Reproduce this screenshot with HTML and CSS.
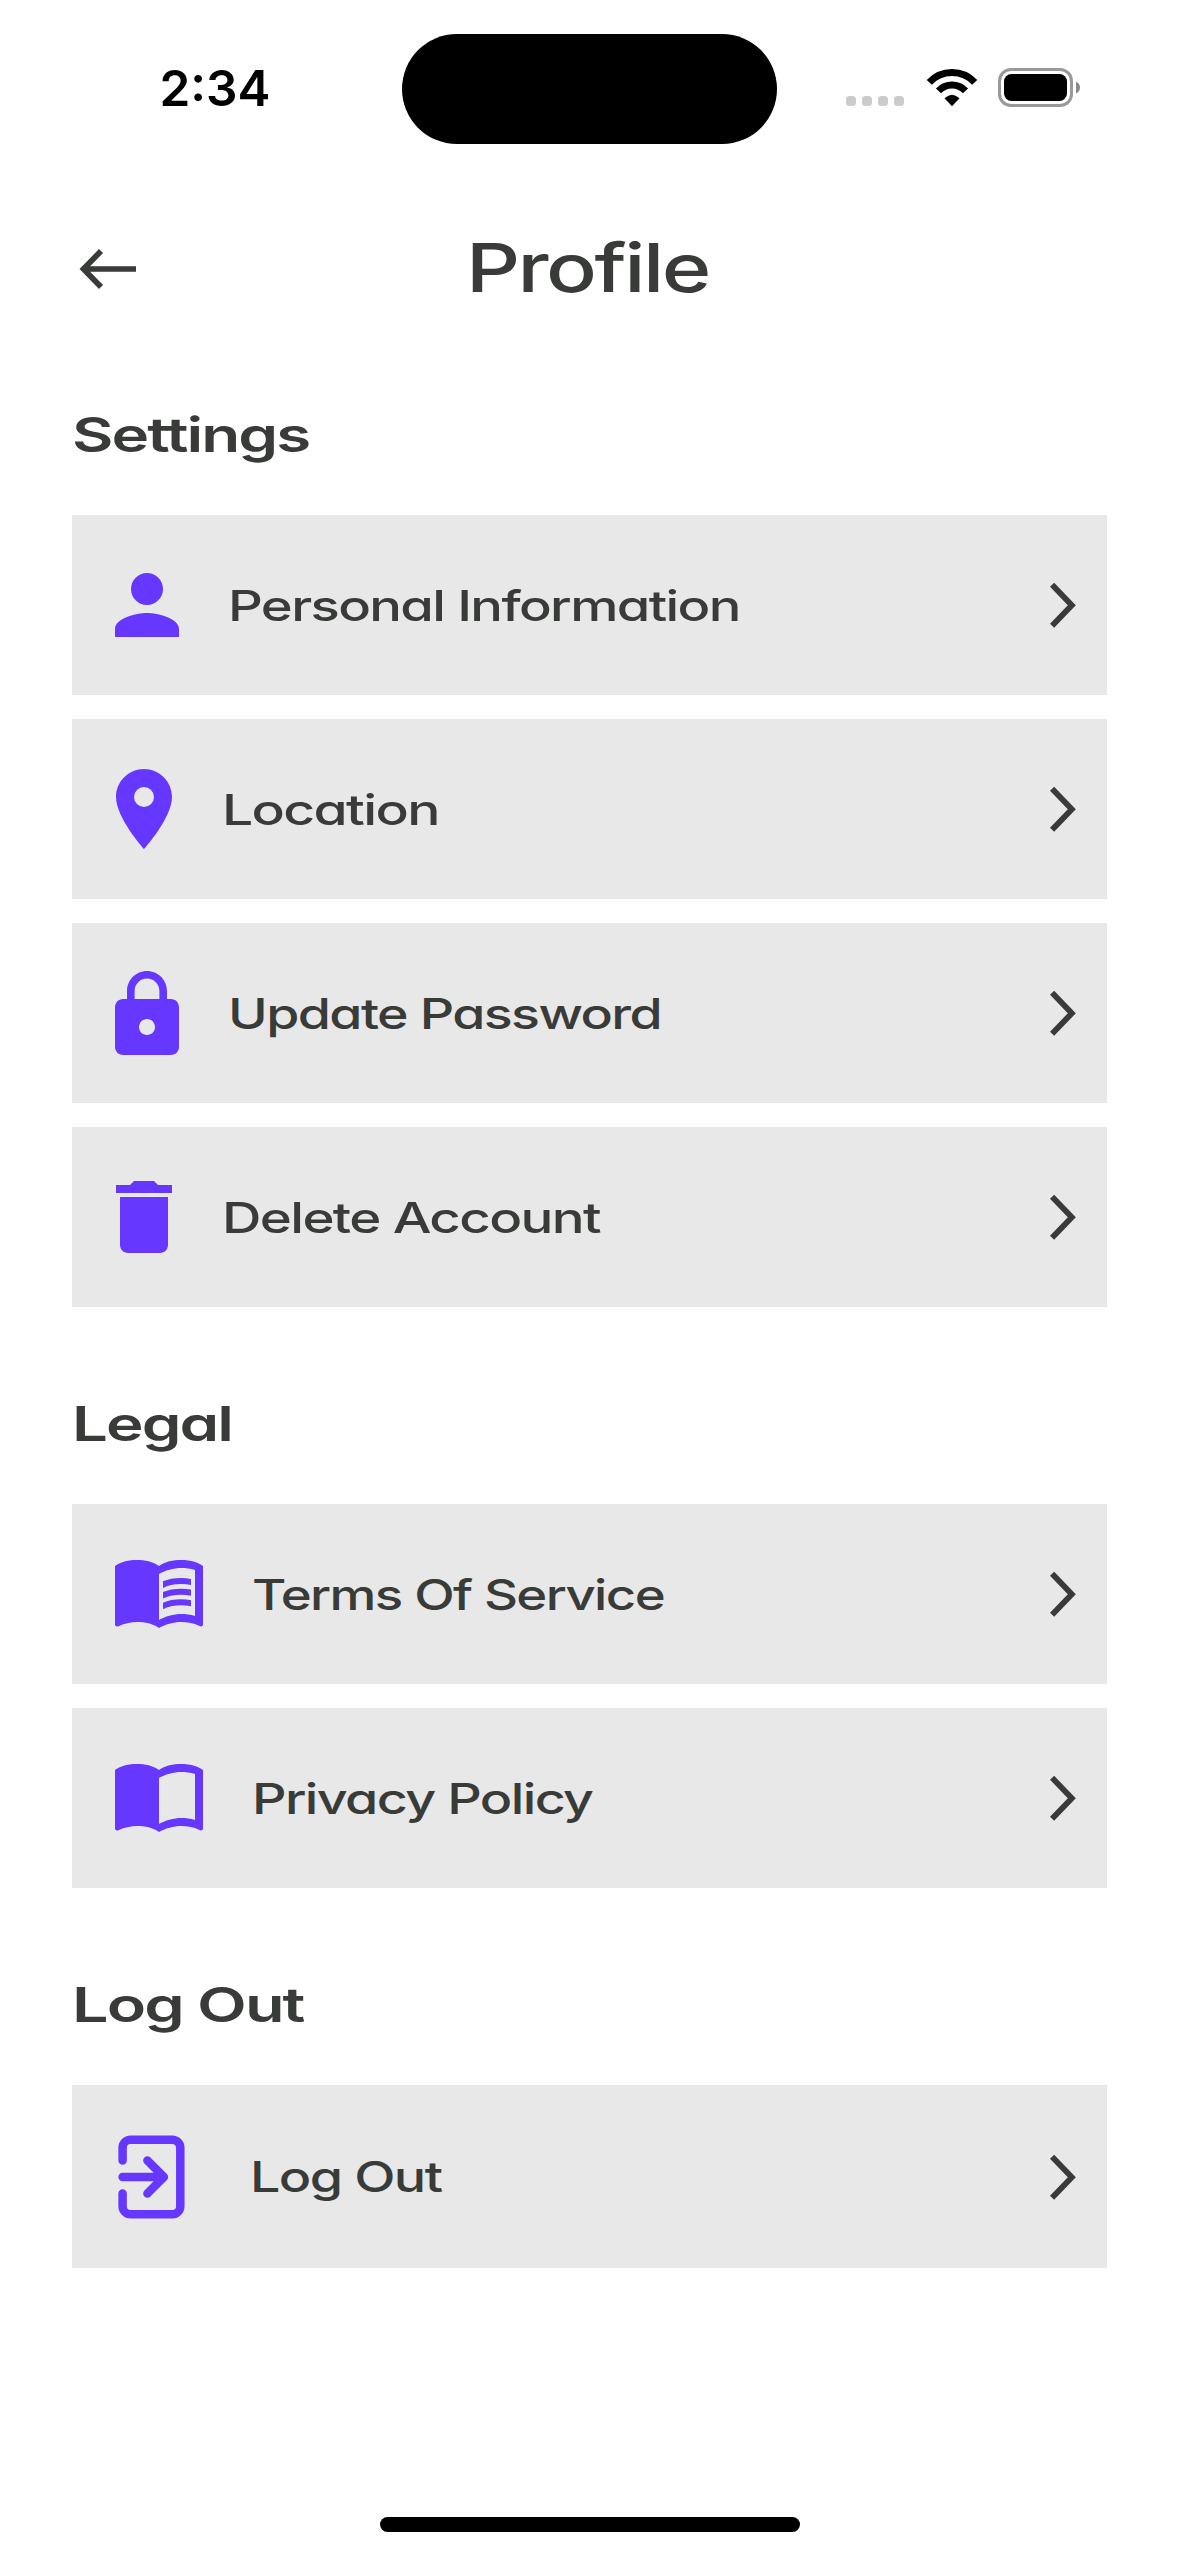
FILE: index.html
```html
<!DOCTYPE html>
<html lang="en">
<head>
<meta charset="utf-8">
<title>Profile</title>
<link rel="stylesheet" href="styles.css">
</head>
<body>
<svg class="defs" aria-hidden="true">
  <symbol id="chevron" viewBox="0 0 28 46"><path d="M3.1 2.8 22.8 23.3 3.1 43.8" fill="none" stroke="currentColor" stroke-width="5.8"/></symbol>
</svg>
<div class="screen">
  <div class="status">
    <span class="time">2:34</span>
    <div class="island"></div>
    <div class="indicators">
      <div class="dots"><i></i><i></i><i></i><i></i></div>
      <svg class="wifi" viewBox="0 0 52 38" width="52" height="38">
        <path d="M3.3 13.4A31 31 0 0 1 48.7 13.4M12.5 21.9A18.5 18.5 0 0 1 39.5 21.9" fill="none" stroke="#000" stroke-width="7"/>
        <path d="M18.5 29.3Q26 22.3 33.5 29.3L26 37.2Z"/>
      </svg>
      <svg class="battery" viewBox="0 0 84 40" width="84" height="40">
        <rect x="1.5" y="2.5" width="72" height="36" rx="11.5" fill="none" stroke="#999" stroke-width="3"/>
        <rect x="6" y="7" width="63" height="27" rx="7.5"/>
        <path d="M78 14.5Q82 16.5 82 20.5T78 26.5Z" fill="#8a8a8a"/>
      </svg>
    </div>
  </div>

  <header class="header">
    <svg class="back" viewBox="0 0 58 42" width="58" height="42"><path d="M57 21H4.5M22 3 4.5 21 22 39" fill="none" stroke="currentColor" stroke-width="5.7"/></svg>
    <h1 class="title">Profile</h1>
  </header>

  <main class="content">
    <h2 class="heading heading-settings">Settings</h2>
    <div class="list">
      <a class="card">
        <svg class="icon" viewBox="4 4 16 16" width="64" height="64"><path d="M12 12c2.21 0 4-1.79 4-4s-1.79-4-4-4-4 1.79-4 4 1.79 4 4 4zm0 2c-2.67 0-8 1.34-8 4v2h16v-2c0-2.66-5.33-4-8-4z"/></svg>
        <span class="label label-personal">Personal Information</span>
        <svg class="chevron"><use href="#chevron"/></svg>
      </a>
      <a class="card">
        <svg class="icon" viewBox="4.75 2 14.5 20" width="58" height="80"><path d="M12 2C8.13 2 5 5.13 5 9c0 5.25 7 13 7 13s7-7.75 7-13c0-3.87-3.13-7-7-7zm0 9.5a2.5 2.5 0 0 1 0-5 2.5 2.5 0 0 1 0 5z"/></svg>
        <span class="label label-location">Location</span>
        <svg class="chevron"><use href="#chevron"/></svg>
      </a>
      <a class="card">
        <svg class="icon" viewBox="4 1 16 21" width="64" height="84"><path d="M18 8h-1V6c0-2.76-2.24-5-5-5S7 3.24 7 6v2H6c-1.1 0-2 .9-2 2v10c0 1.1.9 2 2 2h12c1.1 0 2-.9 2-2V10c0-1.1-.9-2-2-2zm-6 9c-1.1 0-2-.9-2-2s.9-2 2-2 2 .9 2 2-.9 2-2 2zm3.1-9H8.9V6c0-1.71 1.39-3.1 3.1-3.1 1.71 0 3.1 1.39 3.1 3.1v2z"/></svg>
        <span class="label label-password">Update Password</span>
        <svg class="chevron"><use href="#chevron"/></svg>
      </a>
      <a class="card">
        <svg class="icon" viewBox="4.75 3 14.5 18" width="58" height="72"><path d="M6 19c0 1.1.9 2 2 2h8c1.1 0 2-.9 2-2V7H6v12zM19 4h-3.5l-1-1h-5l-1 1H5v2h14V4z"/></svg>
        <span class="label label-delete">Delete Account</span>
        <svg class="chevron"><use href="#chevron"/></svg>
      </a>
    </div>

    <h2 class="heading heading-legal">Legal</h2>
    <div class="list">
      <a class="card">
        <svg class="icon" viewBox="1 4.5 22 17" width="88" height="68">
          <path d="M21 5c-1.11-.35-2.33-.5-3.5-.5-1.95 0-4.05.4-5.5 1.5-1.45-1.1-3.55-1.5-5.5-1.5S2.45 4.9 1 6v14.65c0 .25.25.5.5.5.1 0 .15-.05.25-.05C3.1 20.45 5.05 20 6.5 20c1.95 0 4.05.4 5.5 1.5 1.35-.85 3.8-1.5 5.5-1.5 1.65 0 3.35.3 4.75 1.05.1.05.15.05.25.05.25 0 .5-.25.5-.5V6c-.6-.45-1.25-.75-2-1zm0 13.5c-1.1-.35-2.3-.5-3.5-.5-1.7 0-4.15.65-5.5 1.5V8c1.35-.85 3.8-1.5 5.5-1.5 1.2 0 2.4.15 3.5.5v11.5z"/>
          <path d="M17.5 10.5c.88 0 1.73.09 2.5.26V9.24c-.79-.15-1.64-.24-2.5-.24-1.7 0-3.24.29-4.5.83v1.66c1.13-.64 2.7-.99 4.5-.99zM13 12.49v1.66c1.13-.64 2.7-.99 4.5-.99.88 0 1.73.09 2.5.26V11.9c-.79-.15-1.64-.24-2.5-.24-1.7 0-3.24.3-4.5.83zm4.5 1.84c-1.7 0-3.24.29-4.5.83v1.66c1.13-.64 2.7-.99 4.5-.99.88 0 1.73.09 2.5.26v-1.52c-.79-.16-1.64-.24-2.5-.24z"/>
        </svg>
        <span class="label label-terms">Terms Of Service</span>
        <svg class="chevron"><use href="#chevron"/></svg>
      </a>
      <a class="card">
        <svg class="icon" viewBox="1 4.5 22 17" width="88" height="68"><path d="M21 5c-1.11-.35-2.33-.5-3.5-.5-1.95 0-4.05.4-5.5 1.5-1.45-1.1-3.55-1.5-5.5-1.5S2.45 4.9 1 6v14.65c0 .25.25.5.5.5.1 0 .15-.05.25-.05C3.1 20.45 5.05 20 6.5 20c1.95 0 4.05.4 5.5 1.5 1.35-.85 3.8-1.5 5.5-1.5 1.65 0 3.35.3 4.75 1.05.1.05.15.05.25.05.25 0 .5-.25.5-.5V6c-.6-.45-1.25-.75-2-1zm0 13.5c-1.1-.35-2.3-.5-3.5-.5-1.7 0-4.15.65-5.5 1.5V8c1.35-.85 3.8-1.5 5.5-1.5 1.2 0 2.4.15 3.5.5v11.5z"/></svg>
        <span class="label label-privacy">Privacy Policy</span>
        <svg class="chevron"><use href="#chevron"/></svg>
      </a>
    </div>

    <h2 class="heading heading-logout">Log Out</h2>
    <div class="list">
      <a class="card card-logout">
        <svg class="icon" viewBox="0 0 86 84" width="86" height="84">
          <path d="M7.6 25.4V12.7a8 8 0 0 1 8-8H57.3a8 8 0 0 1 8 8V71.3a8 8 0 0 1-8 8H15.6a8 8 0 0 1-8-8V58.6M7.6 42H48.5M32.4 25.5 48.9 42 32.4 58.5" fill="none" stroke="currentColor" stroke-width="8.5" stroke-linecap="round" stroke-linejoin="round"/>
        </svg>
        <span class="label label-logout">Log Out</span>
        <svg class="chevron"><use href="#chevron"/></svg>
      </a>
    </div>
  </main>
  <div class="home"></div>
</div>
</body>
</html>
```
FILE: styles.css
```css
* { box-sizing: border-box; }

body {
  margin: 0;
  background: #fff;
  color: #393b39;
  font-family: Inter, "Liberation Sans", sans-serif;
}

.defs { display: none; }

.screen {
  display: flex;
  flex-direction: column;
  width: 1179px;
  height: 2556px;
}

/* Status bar */
.status {
  display: grid;
  grid-template-columns: 402px 375px 1fr;
  align-items: start;
  height: 218px;
  padding-top: 33px;
  color: #000;
}

.time {
  padding: 25px 0 0 159.5px;
  font-size: 49.5px;
  font-weight: 600;
  line-height: 60px;
}

.island {
  height: 110.6px;
  margin-top: .7px;
  border-radius: 56px;
  background: #000;
}

.indicators {
  display: flex;
  align-items: flex-end;
  height: 74px;
  padding-left: 69px;
}

.dots { display: flex; gap: 6px; padding-bottom: 1px; }
.dots i { width: 10px; height: 10px; border-radius: 3.5px; background: #ccc; }
.wifi { margin-left: 21.5px; }
.battery { margin-left: 20.5px; }

/* Header */
.header {
  display: grid;
  grid-template-columns: 1fr auto 1fr;
  align-items: center;
  height: 100px;
  padding: 0 79px;
}

.back { margin-top: 2px; }

.title {
  margin: 0 5px 0 0;
  font-size: 67px;
  font-weight: 500;
  line-height: 100px;
  transform: scaleX(1.26);
}

/* Sections */
.content { flex: 1; padding: 0 72px; }

.heading {
  width: fit-content;
  margin: 86px 0 50px;
  font-size: 48px;
  font-weight: 600;
  line-height: 61px;
  transform-origin: left;
}
.heading-settings { transform: scaleX(1.328); }
.heading-legal { transform: scaleX(1.324); }
.heading-logout { transform: scaleX(1.349); }

.list { display: flex; flex-direction: column; gap: 24px; }

.card {
  display: flex;
  align-items: center;
  height: 180px;
  padding: 0 30.5px 0 43px;
  background: #e8e8e8;
}
.card-logout { height: 183px; }

.icon { color: #6638ff; fill: currentColor; }

.label {
  margin: 0 auto 0 48.5px;
  font-size: 42.6px;
  font-weight: 500;
  line-height: 61px;
  white-space: nowrap;
  transform-origin: left;
}

/* Single-storey "a" and tight tracking, widened per label below */
.title, .heading, .label {
  font-feature-settings: "cv11";
  letter-spacing: -.03em;
}

.label-personal { transform: scaleX(1.275); }
.label-location { transform: scaleX(1.298); }
.label-password { transform: scaleX(1.261); }
.label-delete { transform: scaleX(1.283); }
.label-terms { transform: scaleX(1.238); }
.label-privacy { transform: scaleX(1.264); }
.label-logout { transform: scaleX(1.264); }

.chevron { width: 28px; height: 46px; color: #393b39; }

.home {
  width: 420px;
  height: 15px;
  margin: 0 auto 24px;
  border-radius: 8px;
  background: #000;
}
```
